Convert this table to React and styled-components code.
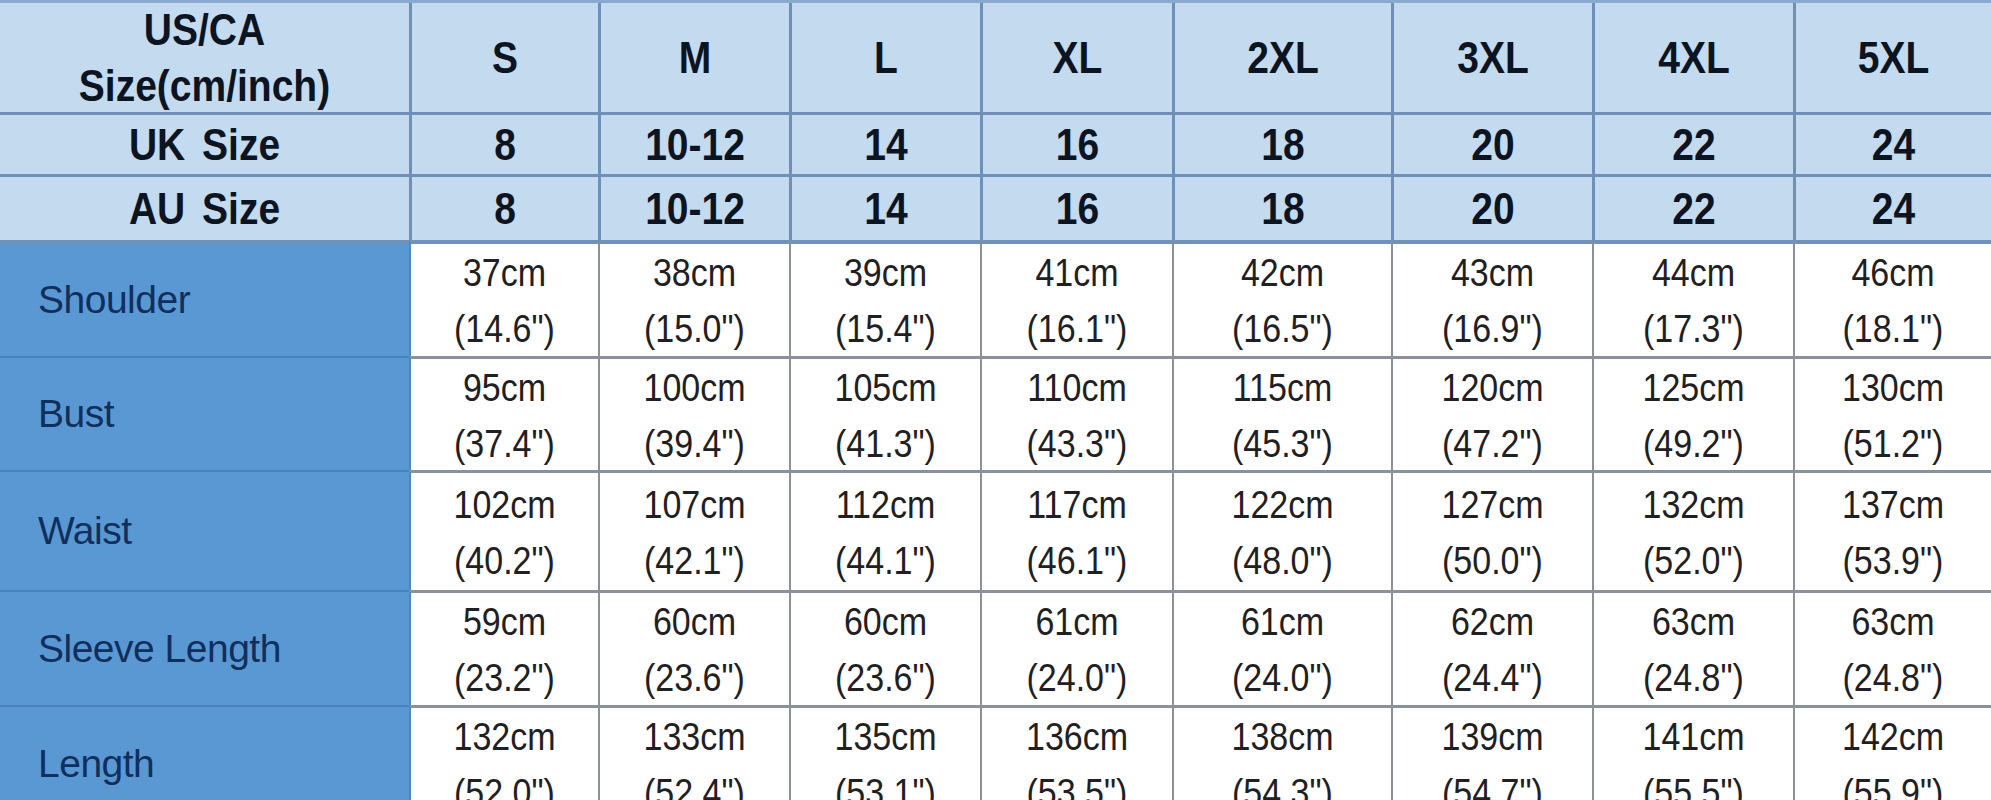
import React from 'react';
import styled, { createGlobalStyle } from 'styled-components';

const GlobalStyle = createGlobalStyle`
  html, body {
    margin: 0;
    padding: 0;
    background: #ffffff;
    overflow: hidden;
  }
  body {
    font-family: "Liberation Sans", Arial, sans-serif;
  }
`;

const Chart = styled.div`
  display: grid;
  grid-template-columns: 409px 189px 191px 191px 192px 219px 201px 201px 198px;
  grid-template-rows: 109px 62px 66px 116px 114px 120px 115px 115px;
  width: 1991px;
  height: 800px;
  border-top: 3px solid #8aa9cf;
  overflow: hidden;
`;

const HeadCell = styled.div`
  display: flex;
  flex-direction: column;
  align-items: center;
  justify-content: center;
  background: #c4daef;
  color: #0c1422;
  font-weight: 700;
  font-size: 39px;
  line-height: 56px;
  word-spacing: 6px;
  text-align: center;
  border-left: ${(p) => (p.$first ? 'none' : '3px solid #6f8fb6')};
  border-top: ${(p) => (p.$top ? 'none' : '3px solid #6f8fb6')};
`;

const LabelCell = styled.div`
  display: flex;
  align-items: center;
  padding-left: 38px;
  background: #5a98d4;
  color: #112f5c;
  font-size: 39px;
  letter-spacing: -0.5px;
  border-top: ${(p) => (p.$firstRow ? '4px solid #7091b8' : '2px solid #4a82bd')};
`;

const ValueCell = styled.div`
  display: flex;
  flex-direction: column;
  align-items: center;
  justify-content: center;
  background: #ffffff;
  color: #1e2022;
  font-size: 34px;
  line-height: 56px;
  border-left: ${(p) => (p.$firstCol ? '2px solid #4f86c0' : '2px solid #8b9198')};
  border-top: ${(p) => (p.$firstRow ? '4px solid #7091b8' : '3px solid #8b9198')};
`;

const Line = styled.span`
  display: block;
  white-space: nowrap;
  transform: scaleY(1.14);
`;

const sizes = ['S', 'M', 'L', 'XL', '2XL', '3XL', '4XL', '5XL'];
const uk = ['8', '10-12', '14', '16', '18', '20', '22', '24'];

const measures = [
  { name: 'Shoulder', cm: [37, 38, 39, 41, 42, 43, 44, 46], inch: ['14.6', '15.0', '15.4', '16.1', '16.5', '16.9', '17.3', '18.1'] },
  { name: 'Bust', cm: [95, 100, 105, 110, 115, 120, 125, 130], inch: ['37.4', '39.4', '41.3', '43.3', '45.3', '47.2', '49.2', '51.2'] },
  { name: 'Waist', cm: [102, 107, 112, 117, 122, 127, 132, 137], inch: ['40.2', '42.1', '44.1', '46.1', '48.0', '50.0', '52.0', '53.9'] },
  { name: 'Sleeve Length', cm: [59, 60, 60, 61, 61, 62, 63, 63], inch: ['23.2', '23.6', '23.6', '24.0', '24.0', '24.4', '24.8', '24.8'] },
  { name: 'Length', cm: [132, 133, 135, 136, 138, 139, 141, 142], inch: ['52.0', '52.4', '53.1', '53.5', '54.3', '54.7', '55.5', '55.9'] },
];

const App = () => {
  return (
    <>
      <GlobalStyle />
      <Chart>
        <HeadCell $first $top>
          <Line>US/CA</Line>
          <Line>Size(cm/inch)</Line>
        </HeadCell>
        {sizes.map((s) => (
          <HeadCell key={s} $top>
            <Line>{s}</Line>
          </HeadCell>
        ))}

        <HeadCell $first>
          <Line>UK Size</Line>
        </HeadCell>
        {uk.map((v, i) => (
          <HeadCell key={'uk' + i}>
            <Line>{v}</Line>
          </HeadCell>
        ))}

        <HeadCell $first>
          <Line>AU Size</Line>
        </HeadCell>
        {uk.map((v, i) => (
          <HeadCell key={'au' + i}>
            <Line>{v}</Line>
          </HeadCell>
        ))}

        {measures.map((m, r) => (
          <React.Fragment key={m.name}>
            <LabelCell $firstRow={r === 0}>{m.name}</LabelCell>
            {m.cm.map((cm, i) => (
              <ValueCell key={i} $firstRow={r === 0} $firstCol={i === 0}>
                <Line>{cm}cm</Line>
                <Line>({m.inch[i]}")</Line>
              </ValueCell>
            ))}
          </React.Fragment>
        ))}
      </Chart>
    </>
  );
};

export default App;
